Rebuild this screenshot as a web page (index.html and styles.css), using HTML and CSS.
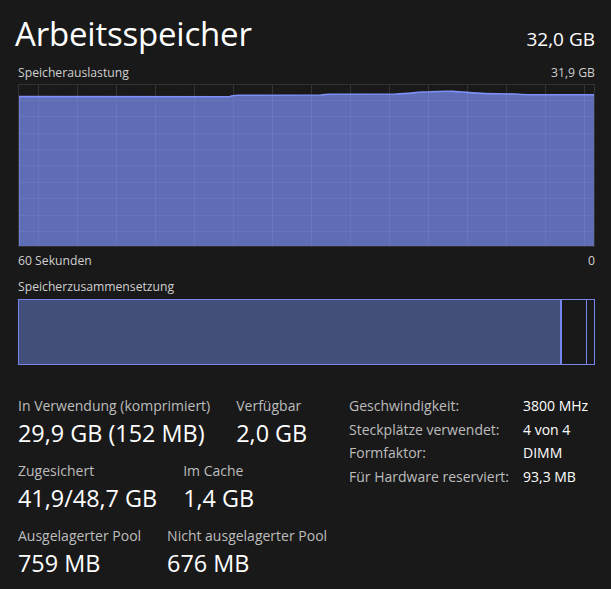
FILE: index.html
```html
<!DOCTYPE html>
<html lang="de">
<head>
<meta charset="utf-8">
<title>Arbeitsspeicher</title>
<link rel="stylesheet" href="styles.css">
</head>
<body>
<main class="page">
  <header class="head">
    <h1 class="title">Arbeitsspeicher</h1>
    <div class="total">32,0 GB</div>
  </header>

  <div class="caption-row">
    <span>Speicherauslastung</span>
    <span>31,9 GB</span>
  </div>

  <div class="graph">
    <svg viewBox="0 0 577 163" preserveAspectRatio="none" width="577" height="163">
      <g class="grid">
        <line x1="20.5" y1="0" x2="20.5" y2="163"/>
        <line x1="59.5" y1="0" x2="59.5" y2="163"/>
        <line x1="98.5" y1="0" x2="98.5" y2="163"/>
        <line x1="137.5" y1="0" x2="137.5" y2="163"/>
        <line x1="176.5" y1="0" x2="176.5" y2="163"/>
        <line x1="215.5" y1="0" x2="215.5" y2="163"/>
        <line x1="254.5" y1="0" x2="254.5" y2="163"/>
        <line x1="293.5" y1="0" x2="293.5" y2="163"/>
        <line x1="332.5" y1="0" x2="332.5" y2="163"/>
        <line x1="371.5" y1="0" x2="371.5" y2="163"/>
        <line x1="410.5" y1="0" x2="410.5" y2="163"/>
        <line x1="449.5" y1="0" x2="449.5" y2="163"/>
        <line x1="488.5" y1="0" x2="488.5" y2="163"/>
        <line x1="527.5" y1="0" x2="527.5" y2="163"/>
        <line x1="566.5" y1="0" x2="566.5" y2="163"/>
        <line x1="0" y1="16.5" x2="577" y2="16.5"/>
        <line x1="0" y1="32.5" x2="577" y2="32.5"/>
        <line x1="0" y1="49.5" x2="577" y2="49.5"/>
        <line x1="0" y1="65.5" x2="577" y2="65.5"/>
        <line x1="0" y1="81.5" x2="577" y2="81.5"/>
        <line x1="0" y1="98.5" x2="577" y2="98.5"/>
        <line x1="0" y1="114.5" x2="577" y2="114.5"/>
        <line x1="0" y1="131.5" x2="577" y2="131.5"/>
        <line x1="0" y1="147.5" x2="577" y2="147.5"/>
      </g>
      <path class="area" d="M0.5,163 L0.5,12.5 L212,12.7 C214,11.4 216,11.3 220,11.3 L303,11 C306,10.3 309,10.2 312,10.2 L378,10 C392,9.6 400,8 412,7.8 C420,7.4 428,7.2 435,7.4 C445,7.8 455,9.2 467,9.6 L497,10 C502,10.6 505,10.8 510,10.8 L576,10.8 L576,163 Z"/>
      <g class="grid-over">
        <line x1="20.5" y1="12" x2="20.5" y2="163"/>
        <line x1="59.5" y1="12" x2="59.5" y2="163"/>
        <line x1="98.5" y1="12" x2="98.5" y2="163"/>
        <line x1="137.5" y1="12" x2="137.5" y2="163"/>
        <line x1="176.5" y1="12" x2="176.5" y2="163"/>
        <line x1="215.5" y1="12" x2="215.5" y2="163"/>
        <line x1="254.5" y1="11" x2="254.5" y2="163"/>
        <line x1="293.5" y1="11" x2="293.5" y2="163"/>
        <line x1="332.5" y1="10" x2="332.5" y2="163"/>
        <line x1="371.5" y1="10" x2="371.5" y2="163"/>
        <line x1="410.5" y1="8" x2="410.5" y2="163"/>
        <line x1="449.5" y1="8" x2="449.5" y2="163"/>
        <line x1="488.5" y1="10" x2="488.5" y2="163"/>
        <line x1="527.5" y1="11" x2="527.5" y2="163"/>
        <line x1="566.5" y1="11" x2="566.5" y2="163"/>
        <line x1="1" y1="16.5" x2="576" y2="16.5"/>
        <line x1="1" y1="32.5" x2="576" y2="32.5"/>
        <line x1="1" y1="49.5" x2="576" y2="49.5"/>
        <line x1="1" y1="65.5" x2="576" y2="65.5"/>
        <line x1="1" y1="81.5" x2="576" y2="81.5"/>
        <line x1="1" y1="98.5" x2="576" y2="98.5"/>
        <line x1="1" y1="114.5" x2="576" y2="114.5"/>
        <line x1="1" y1="131.5" x2="576" y2="131.5"/>
        <line x1="1" y1="147.5" x2="576" y2="147.5"/>
      </g>
      <path class="edge" d="M0.75,163 L0.75,12.5 L212,12.7 C214,11.4 216,11.3 220,11.3 L303,11 C306,10.3 309,10.2 312,10.2 L378,10 C392,9.6 400,8 412,7.8 C420,7.4 428,7.2 435,7.4 C445,7.8 455,9.2 467,9.6 L497,10 C502,10.6 505,10.8 510,10.8 L576,10.8"/>
      <rect class="frame" x="0.5" y="0.5" width="576" height="162"/>
    </svg>
  </div>

  <div class="caption-row">
    <span>60 Sekunden</span>
    <span>0</span>
  </div>

  <div class="caption">Speicherzusammensetzung</div>

  <div class="comp">
    <div class="seg seg-used"></div>
    <div class="seg seg-mod"></div>
    <div class="seg seg-rest"></div>
  </div>

  <section class="stats">
    <div class="stats-left">
      <div class="stat-row">
        <div class="stat">
          <div class="stat-label">In Verwendung (komprimiert)</div>
          <div class="stat-value">29,9 GB (152 MB)</div>
        </div>
        <div class="stat">
          <div class="stat-label">Verfügbar</div>
          <div class="stat-value">2,0 GB</div>
        </div>
      </div>
      <div class="stat-row">
        <div class="stat">
          <div class="stat-label">Zugesichert</div>
          <div class="stat-value">41,9/48,7 GB</div>
        </div>
        <div class="stat">
          <div class="stat-label">Im Cache</div>
          <div class="stat-value">1,4 GB</div>
        </div>
      </div>
      <div class="stat-row">
        <div class="stat">
          <div class="stat-label">Ausgelagerter Pool</div>
          <div class="stat-value">759 MB</div>
        </div>
        <div class="stat">
          <div class="stat-label">Nicht ausgelagerter Pool</div>
          <div class="stat-value">676 MB</div>
        </div>
      </div>
    </div>
    <dl class="specs">
      <dt>Geschwindigkeit:</dt><dd>3800 MHz</dd>
      <dt>Steckplätze verwendet:</dt><dd>4 von 4</dd>
      <dt>Formfaktor:</dt><dd>DIMM</dd>
      <dt>Für Hardware reserviert:</dt><dd>93,3 MB</dd>
    </dl>
  </section>
</main>
</body>
</html>
```

FILE: styles.css
```css
* { box-sizing: border-box; }

html, body {
  margin: 0;
  padding: 0;
  background: #191919;
}

body {
  font-family: "Segoe UI", "Open Sans", "Noto Sans", sans-serif;
  color: #ffffff;
  width: 611px;
  height: 589px;
  overflow: hidden;
}

.page {
  padding: 14px 16px 0 18px;
}

.head {
  display: flex;
  justify-content: space-between;
  align-items: baseline;
}

.title {
  margin: 0 0 0 -3px;
  font-size: 33px;
  font-weight: 400;
  line-height: 40px;
  letter-spacing: -0.2px;
}

.total {
  font-size: 19px;
  line-height: 24px;
}

.caption-row {
  display: flex;
  justify-content: space-between;
  font-size: 12.2px;
  line-height: 16px;
  color: #cfcfcf;
}

.head + .caption-row {
  margin-top: 11px;
  margin-bottom: 3px;
}

.graph {
  height: 163px;
}

.graph svg {
  display: block;
}

.grid line {
  stroke: #333333;
  stroke-width: 1;
}

.grid-over line {
  stroke: rgba(255, 255, 255, 0.06);
  stroke-width: 1;
}

.area {
  fill: #5f6db6;
}

.edge {
  fill: none;
  stroke: #7e90f5;
  stroke-width: 1.6;
}

.frame {
  fill: none;
  stroke: #333333;
  stroke-width: 1;
}

.graph + .caption-row {
  margin-top: 6px;
}

.caption {
  margin-top: 10px;
  font-size: 12.2px;
  line-height: 16px;
  color: #cfcfcf;
}

.comp {
  margin-top: 4px;
  height: 66px;
  display: flex;
  border: 1px solid #7587ef;
}

.seg-used {
  flex: 0 0 543px;
  background: #434f7b;
  border-right: 2px solid #7587ef;
}

.seg-mod {
  flex: 0 0 25px;
  border-right: 1px solid #7587ef;
}

.seg-rest {
  flex: 1 1 auto;
}

.stats {
  margin-top: 32px;
  display: flex;
  align-items: flex-start;
}

.stats-left {
  width: 331px;
  display: flex;
  flex-direction: column;
  gap: 14px;
}

.stat-row {
  display: flex;
  gap: 26px;
}

.stat-label {
  font-size: 14px;
  line-height: 18px;
  margin-bottom: 3px;
  color: #bdbdbd;
}

.stat-value {
  font-size: 23.4px;
  line-height: 30px;
  color: #ffffff;
}

.specs {
  margin: 0;
  display: grid;
  grid-template-columns: 174px auto;
  align-content: start;
  row-gap: 5.7px;
  font-size: 14px;
  line-height: 18px;
}

.specs dt {
  color: #bdbdbd;
}

.specs dd {
  margin: 0;
  color: #ffffff;
}
```
